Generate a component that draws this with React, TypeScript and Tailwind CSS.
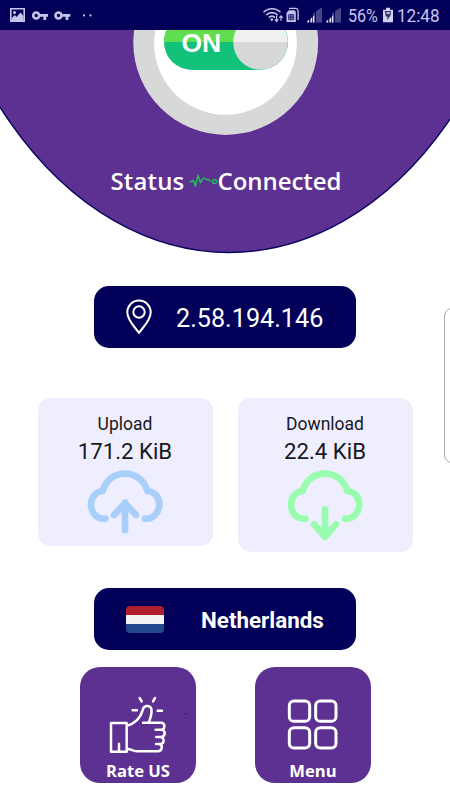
import React from "react";

function StatusBar() {
  return (
    <header className="flex h-[30px] items-center bg-[#020058] font-['Roboto',sans-serif] text-[#c5c5ea]">
      <svg className="h-[30px] w-[110px]" viewBox="0 0 110 30" fill="none">
        <path d="M10 8h15v14H10Z M11.6 9.6v10.8h11.8V9.6Z" fill="#c5c5ea" fillRule="evenodd" />
        <path d="M11.5 18.5 14.5 15l2 2 4-4.5 3 3.5v5h-12Z" fill="#c5c5ea" />
        <circle cx="14.5" cy="12.6" r="1.5" fill="#c5c5ea" />
        <g stroke="#c5c5ea">
          <circle cx="36.2" cy="15.5" r="3" strokeWidth="2.6" />
          <path d="M40 15.3h8M44.8 15v5" strokeWidth="2.7" />
        </g>
        <g stroke="#c5c5ea">
          <circle cx="58.5" cy="15.5" r="3" strokeWidth="2.6" />
          <path d="M62.3 15.3h8M67 15v5" strokeWidth="2.7" />
        </g>
        <circle cx="84" cy="15.4" r="1.1" fill="#c5c5ea" />
        <circle cx="90.5" cy="15.4" r="1.1" fill="#c5c5ea" />
      </svg>
      <div className="flex-1" />
      <svg className="h-[30px] w-[86px]" viewBox="260 0 86 30" fill="none">
        <g stroke="#c5c5ea" strokeWidth="1.6">
          <path d="M264.5 12.3c4.5-4.8 12.5-4.8 17 0M267.2 15c3.2-3.2 8.2-3.2 11.6 0M269.8 17.6c2-1.8 4.4-1.8 6.2 0" />
        </g>
        <circle cx="272.8" cy="19.6" r="1.3" fill="#c5c5ea" />
        <path d="M277.6 15.5v6M275.8 19.4l1.8 2 1.8-2M282 20.8v-5M280.2 17.8l1.8-2 1.8 2" stroke="#c5c5ea" strokeWidth="1.2" />
        <path d="M290 8.3h7.2q1.9.5 1.9 3V20" stroke="#c5c5ea" strokeWidth="1.3" />
        <path d="M290 10.3h5.5l1.3 1.6V22h-9.3v-9.2Z" fill="#c5c5ea" />
        <path d="M289.7 14.7h5v5h-5Zm1.7 0v5m1.7-5v5m-3.4-2.5h5" stroke="#020058" strokeWidth=".8" />
        <path d="M314.3 22.5v-9.2l1.7-1.4v10.6ZM317 22.5V11.2l6-4v15.3ZM333.3 22.5v-9.2l1.7-1.4v10.6ZM336 22.5V11.2l6-4v15.3Z" fill="#48468a" />
        <path d="M308.3 22.5v-1.5l1.9-1.2v2.7ZM311.4 22.5v-3.7l1.9-1.6v5.3ZM314 22.5v-6.2l1.3-1v7.2ZM327.3 22.5v-1.5l1.9-1.2v2.7ZM330.4 22.5v-3.7l1.9-1.6v5.3ZM333 22.5v-6.2l1.3-1v7.2Z" fill="#dedef8" />
      </svg>
      <span className="ml-[2.5px] w-[30px] origin-left scale-x-[.87] whitespace-nowrap pt-[2px] text-[18.5px] leading-[30px]">56%</span>
      <svg className="ml-[4px] h-[30px] w-[12px]" viewBox="0 0 12 30">
        <path d="M4 7.8h4v2h3v12.5H1V9.8h3Z" fill="#d2d2f2" />
        <path d="M2.8 11h6v4.2H7l1.4.2-3.4 5 .5-3.8H3.8Z" fill="#353268" />
        <path d="M4.2 12h3.5v2H5Z" fill="#c5c5ea" />
      </svg>
      <span className="ml-[3.5px] w-[53px] origin-left scale-x-[.9] whitespace-nowrap pt-[2px] text-[19px] leading-[30px]">12:48</span>
    </header>
  );
}

function ConnectionHero() {
  return (
    <section className="relative h-[230px]">
      <svg className="block h-[230px] w-[450px]" viewBox="0 30 450 230">
        <ellipse cx="229" cy="-190" rx="309" ry="442.5" fill="#5d3191" stroke="#0b0560" strokeWidth="1.5" />
        <circle cx="225.7" cy="42.5" r="92.4" fill="#d7d9d8" />
        <circle cx="225.5" cy="43.5" r="71.3" fill="#fff" />
        <rect x="164" y="14" width="124" height="56" rx="28" fill="#12c27b" />
        <path d="M164 42a28 28 0 0 1 28-28h68v28Z" fill="#61dd50" />
        <circle cx="260.5" cy="42.5" r="27.2" fill="#d7d9d8" />
        <path d="M233.3 42a27.2 27.5 0 0 1 54.4 0Z" fill="#f0f0f0" />
      </svg>
      <span className="absolute left-[181.5px] top-[-2px] font-['Liberation_Sans',sans-serif] text-[26.5px] font-bold leading-[30px] text-white">ON</span>
      <div className="absolute left-[110.5px] top-[134px] flex h-[34px] items-center whitespace-nowrap font-['Open_Sans',sans-serif] text-[24px] font-semibold leading-[34px] text-white">
        <span className="w-[77px] tracking-[.15px]">Status</span>
        <svg className="h-[16px] w-[30px]" viewBox="187.5 172 30 16" fill="none" stroke="#22b75a" strokeWidth="1.6" strokeLinejoin="round">
          <path d="M189 180.5h2.3l1.8-1 1.8 5.7 2.6-10.8 2.5 7.2 2.5-4.3h1.8l2 1.3h2l1.7 2" />
          <circle cx="214" cy="180.5" r="2" />
        </svg>
        <span className="tracking-[-.05px]">Connected</span>
      </div>
    </section>
  );
}

type TransferProps = { label: string; value: string; upload?: boolean };

function TransferCard({ label, value, upload }: TransferProps) {
  return (
    <article className={`flex w-[175px] flex-col items-center rounded-[13px] bg-[#efeeff] pt-[13px] font-['Roboto',sans-serif] text-[#17171c] ${upload ? "h-[148px]" : "h-[154px]"}`}>
      <span className="pt-px text-[17.5px] leading-[24px]">{label}</span>
      <span className="mt-px whitespace-nowrap text-[22.2px] leading-[28px]">{value}</span>
      <svg className="mt-[2px] h-[76px] w-[80px]" viewBox="195 245 240 228" fill="none" stroke={upload ? "#a8cffa" : "#99fcae"} strokeWidth="20" strokeLinecap="round" strokeLinejoin="round">
        <path d="M256 400C228 402 213 381 213 357C213 334 230 318 248 317C257 286 282 265 315 265C347 265 373 286 382 317C402 318 418 335 418 357C418 382 399 402 375 400" />
        {upload ? <path d="M315 435v-83M282 389l33-35 33 35" /> : <path d="M315 372v83M282 417l33 37 33-37" />}
      </svg>
    </article>
  );
}

function RateIcon() {
  return (
    <svg className="h-[93px] w-[116px]" viewBox="30 22 348 279" fill="none" stroke="#fff" strokeWidth="7.5" strokeLinecap="round" strokeLinejoin="round">
      <path d="M123 190h47v86h-47ZM147 252v22M171 198c21-5 41-22 47-47 3-16 22-15 26-4 3 13-2 27-8 42M219 189h54c13 0 14 21 0 21h-16M273 210c15 0 15 22 0 22h-14M270 232c15 0 14 21 0 21h-12M267 253c13 2 10 21-3 22h-61c-11 0-19-6-32-8" />
      <path d="M188 152h13M209 115l6 10M255 115l-6 10M263 153h13" />
      <rect x="345" y="160" width="4" height="4" fill="#17104b" stroke="none" />
    </svg>
  );
}

function MenuIcon() {
  return (
    <svg className="h-[93px] w-[116px]" viewBox="30 22 348 279" fill="none" stroke="#fff" strokeWidth="9">
      <rect x="133" y="124" width="61" height="61" rx="14" />
      <rect x="212" y="124" width="61" height="61" rx="14" />
      <rect x="133" y="204" width="61" height="61" rx="14" />
      <rect x="212" y="204" width="61" height="61" rx="14" />
    </svg>
  );
}

function ActionTile({ label, icon }: { label: string; icon: React.ReactNode }) {
  return (
    <button className="flex h-[116px] w-[116px] flex-col items-center overflow-hidden rounded-[20px] bg-[#5d3191] font-['Open_Sans',sans-serif] text-[16.6px] font-bold leading-[22px] text-white">
      {icon}
      <span className="whitespace-nowrap">{label}</span>
    </button>
  );
}

export default function App() {
  return (
    <main className="relative h-[800px] w-[450px] overflow-hidden bg-white">
      <StatusBar />
      <ConnectionHero />
      <section className="mx-auto mt-[26px] flex h-[62px] w-[262px] items-center rounded-[15px] bg-[#020058] font-['Roboto',sans-serif] text-white">
        <svg className="ml-[31px] h-[36px] w-[28px]" viewBox="0 0 28 36" fill="none" stroke="#fff" strokeWidth="2">
          <path d="M14 34C11 29 2.3 22 2.3 13.3a11.7 11.7 0 0 1 23.4 0C25.7 22 17 29 14 34Z" strokeLinejoin="round" />
          <circle cx="14" cy="13" r="5.7" />
        </svg>
        <span className="ml-[23px] whitespace-nowrap pt-[4px] text-[25.2px] leading-[30px]">2.58.194.146</span>
      </section>
      <section className="mt-[50px] flex items-start gap-[25px] pl-[37.5px]">
        <TransferCard label="Upload" value="171.2 KiB" upload />
        <TransferCard label="Download" value="22.4 KiB" />
      </section>
      <section className="mx-auto mt-[36px] flex h-[62px] w-[262px] items-center rounded-[15px] bg-[#020058] font-['Roboto',sans-serif] text-white">
        <div className="ml-[32px] flex h-[27px] w-[38px] flex-col overflow-hidden rounded-[4px]">
          <div className="flex-1 bg-[#ae1f2b]" />
          <div className="flex-1 bg-[#f3f3f5]" />
          <div className="flex-1 bg-[#22498c]" />
        </div>
        <span className="ml-[37px] whitespace-nowrap pt-[2px] text-[22.4px] font-bold leading-[30px]">Netherlands</span>
      </section>
      <nav className="mt-[17px] flex gap-[59px] pl-[80px]">
        <ActionTile label="Rate US" icon={<RateIcon />} />
        <ActionTile label="Menu" icon={<MenuIcon />} />
      </nav>
      <div className="absolute left-[444px] top-[308px] h-[155px] w-[20px] rounded-[8px] border border-[#aaa] bg-white" />
    </main>
  );
}
